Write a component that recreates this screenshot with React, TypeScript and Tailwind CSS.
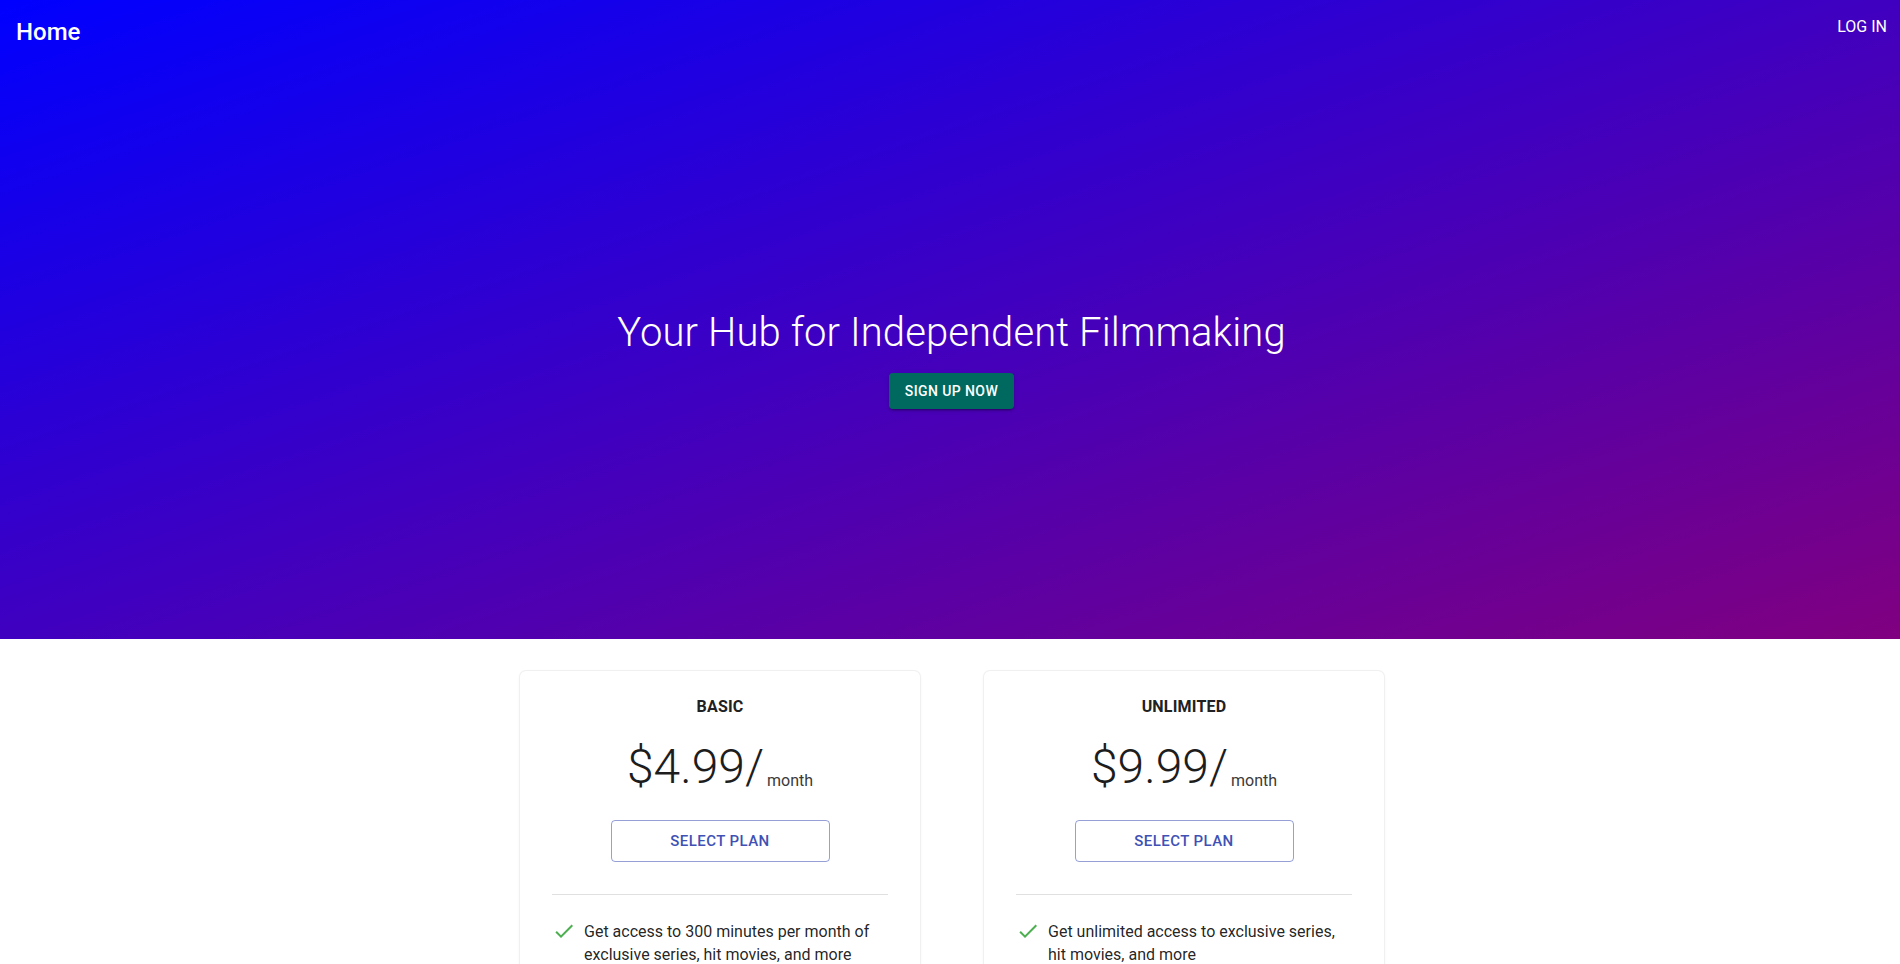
import React from "react";

function CheckIcon() {
  return (
    <svg width="24" height="24" viewBox="0 0 24 24" className="shrink-0" aria-hidden="true">
      <path d="M9 16.17L4.83 12l-1.42 1.41L9 19 21 7l-1.41-1.41z" fill="#4caf50" />
    </svg>
  );
}

function PlanCard({ title, price, feature }: { title: string; price: string; feature: string }) {
  return (
    <div className="w-[400px] h-[360px] bg-white rounded-[6px] shadow-[0_0_0_1px_#f0f0f0,0_1px_3px_rgba(0,0,0,0.1)] px-8 pt-[24px] flex flex-col">
      <div className="text-center text-[16px] leading-[24px] font-bold text-[#212121] tracking-[0.2px]">{title}</div>
      <div className="mt-[24px] flex items-baseline justify-center">
        <span className="text-[48px] leading-[48px] font-light text-[#1d1d1d]">{price}</span>
        <span className="ml-[3px] translate-y-[3px] text-[16px] leading-[24px] text-[#3a3a3a]">month</span>
      </div>
      <div className="mt-[29px] flex justify-center">
        <button className="w-[219px] h-[42px] rounded-[4px] border border-[rgba(63,81,181,0.55)] text-[#3f51b5] text-[15px] font-medium tracking-[0.43px] uppercase">
          Select plan
        </button>
      </div>
      <div className="mt-[32px] h-px bg-[#e0e0e0]" />
      <div className="mt-[24px] flex items-start gap-2">
        <CheckIcon />
        <p className="text-[16px] leading-[23px] text-[rgba(0,0,0,0.87)] pt-[1px]">{feature}</p>
      </div>
    </div>
  );
}

export default function App() {
  return (
    <div className="min-h-screen bg-white font-[Roboto,'Noto_Sans',sans-serif] overflow-hidden">
      <section className="h-[639px] flex flex-col bg-[linear-gradient(to_bottom_right,#0000ff,#800080)] text-white">
        <div className="flex justify-between items-start pl-4 pr-[13px]">
          <div className="h-16 flex items-center text-[24px] font-medium">Home</div>
          <button className="mt-[15px] text-[16px] leading-[24px] font-normal uppercase">Log in</button>
        </div>
        <div className="flex-1 flex flex-col items-center justify-center pt-[15px] pl-[3px]">
          <h1 className="text-[40px] leading-[48px] font-light tracking-[0.1px]">Your Hub for Independent Filmmaking</h1>
          <button className="mt-4 px-4 py-[6px] text-[14px] leading-[24px] font-medium uppercase tracking-[0.4px] bg-[#00695f] text-white rounded-[4px] shadow-[0_3px_1px_-2px_rgba(0,0,0,0.2),0_2px_2px_0_rgba(0,0,0,0.14),0_1px_5px_0_rgba(0,0,0,0.12)]">
            Sign up now
          </button>
        </div>
      </section>
      <section className="pt-8 pl-1 flex justify-center gap-16">
        <PlanCard
          title="BASIC"
          price="$4.99/"
          feature="Get access to 300 minutes per month of exclusive series, hit movies, and more"
        />
        <PlanCard
          title="UNLIMITED"
          price="$9.99/"
          feature="Get unlimited access to exclusive series, hit movies, and more"
        />
      </section>
    </div>
  );
}
